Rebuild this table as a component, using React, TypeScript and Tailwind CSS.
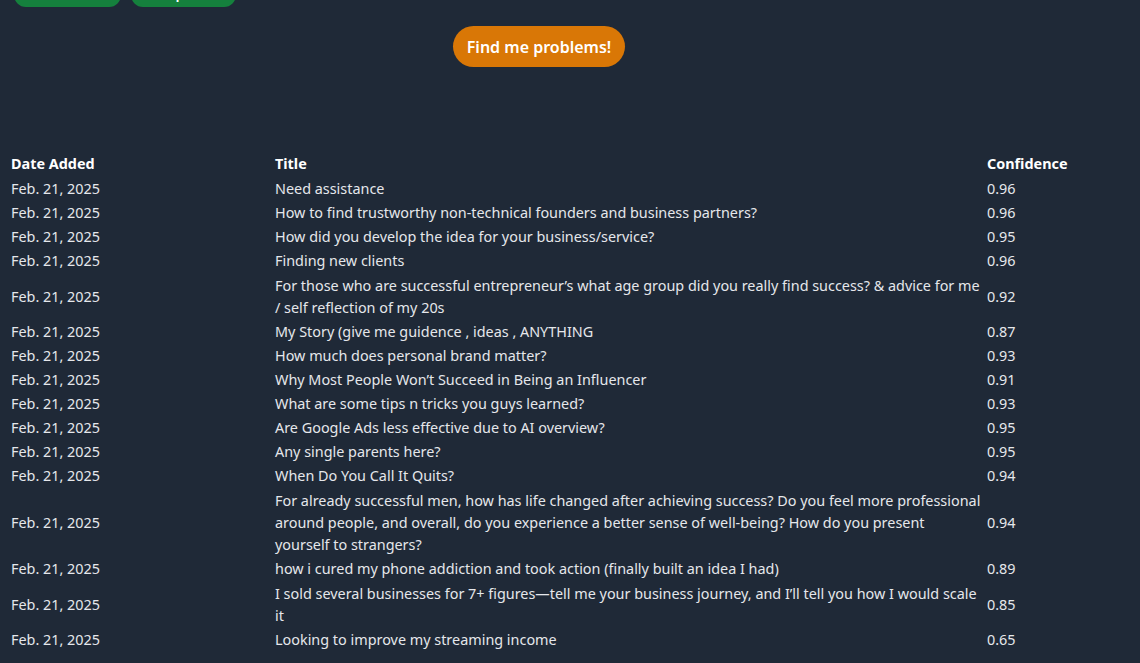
import React from "react";

const rows: [string, string][] = [
  ["Need assistance", "0.96"],
  ["How to find trustworthy non-technical founders and business partners?", "0.96"],
  ["How did you develop the idea for your business/service?", "0.95"],
  ["Finding new clients", "0.96"],
  [
    "For those who are successful entrepreneur\u2019s what age group did you really find success? & advice for me / self reflection of my 20s",
    "0.92",
  ],
  ["My Story (give me guidence , ideas , ANYTHING", "0.87"],
  ["How much does personal brand matter?", "0.93"],
  ["Why Most People Won\u2019t Succeed in Being an Influencer", "0.91"],
  ["What are some tips n tricks you guys learned?", "0.93"],
  ["Are Google Ads less effective due to AI overview?", "0.95"],
  ["Any single parents here?", "0.95"],
  ["When Do You Call It Quits?", "0.94"],
  [
    "For already successful men, how has life changed after achieving success? Do you feel more professional around people, and overall, do you experience a better sense of well-being? How do you present yourself to strangers?",
    "0.94",
  ],
  ["how i cured my phone addiction and took action (finally built an idea I had)", "0.89"],
  [
    "I sold several businesses for 7+ figures\u2014tell me your business journey, and I\u2019ll tell you how I would scale it",
    "0.85",
  ],
  ["Looking to improve my streaming income", "0.65"],
];

export default function App() {
  return (
    <div
      className="min-h-screen bg-[#1f2937] text-[#e5e7eb] overflow-hidden"
      style={{ fontFamily: '"Noto Sans", "Open Sans", sans-serif' }}
    >
      {/* Tags */}
      <div className="flex gap-[10px] pl-[14px] mt-[-17px]">
        <span className="h-[24px] w-[107px] rounded-full bg-[#15803d] text-white text-xs font-bold flex items-center justify-center">
          smallbusiness
        </span>
        <span className="h-[24px] w-[105px] rounded-full bg-[#15803d] text-white text-xs font-bold flex items-center justify-center">
          entrepreneur
        </span>
      </div>

      {/* Action */}
      <div className="flex mt-[19px] pl-[453px]">
        <button className="h-[41px] w-[172px] rounded-full bg-[#d97706] text-white font-semibold text-base">
          Find me problems!
        </button>
      </div>

      {/* Results */}
      <table className="mt-[84px] ml-[11px] text-[14.4px] border-collapse table-fixed w-[1129px]">
        <thead>
          <tr className="h-[26px]">
            <th className="w-[264px] text-left font-bold text-white p-0">Date Added</th>
            <th className="w-[712px] text-left font-bold text-white p-0">Title</th>
            <th className="text-left font-bold text-white p-0">Confidence</th>
          </tr>
        </thead>
        <tbody>
          {rows.map(([title, conf], i) => (
            <tr key={i}>
              <td className="p-0 py-px leading-[22px] align-middle">Feb. 21, 2025</td>
              <td className={"p-0 leading-[22px] align-middle pr-[6px] " + (title.length > 95 ? "py-[1.5px]" : "py-px")}>
                {title}
              </td>
              <td className="p-0 py-px leading-[22px] align-middle">{conf}</td>
            </tr>
          ))}
        </tbody>
      </table>
    </div>
  );
}
